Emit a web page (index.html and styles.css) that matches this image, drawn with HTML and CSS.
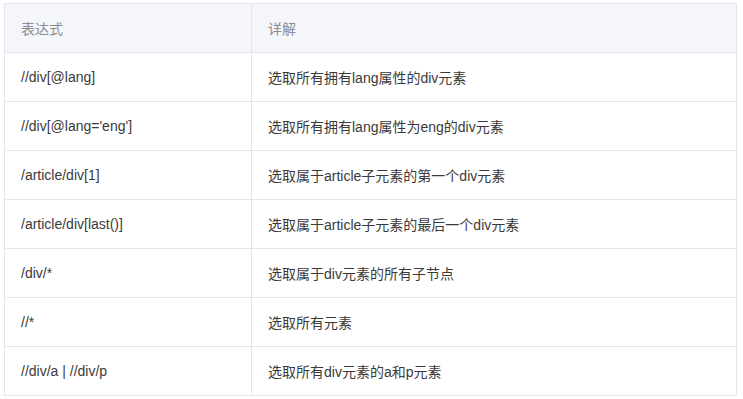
FILE: index.html
```html
<!DOCTYPE html>
<html lang="zh">
<head>
<meta charset="utf-8">
<link rel="stylesheet" href="styles.css">
</head>
<body>
<div class="wrap">
<table class="tbl">
  <thead>
    <tr><th class="c1">表达式</th><th>详解</th></tr>
  </thead>
  <tbody>
    <tr><td class="c1">//div[@lang]</td><td>选取所有拥有lang属性的div元素</td></tr>
    <tr><td class="c1">//div[@lang='eng']</td><td>选取所有拥有lang属性为eng的div元素</td></tr>
    <tr><td class="c1">/article/div[1]</td><td>选取属于article子元素的第一个div元素</td></tr>
    <tr><td class="c1">/article/div[last()]</td><td>选取属于article子元素的最后一个div元素</td></tr>
    <tr><td class="c1">/div/*</td><td>选取属于div元素的所有子节点</td></tr>
    <tr><td class="c1">//*</td><td>选取所有元素</td></tr>
    <tr><td class="c1">//div/a | //div/p</td><td>选取所有div元素的a和p元素</td></tr>
  </tbody>
</table>
</div>
</body>
</html>
```

FILE: styles.css
```css
html, body {
  margin: 0;
  padding: 0;
  background: #fff;
}
.wrap {
  padding: 3px 6px 0 4px;
}
.tbl {
  width: 733px;
  border-collapse: collapse;
  table-layout: fixed;
  font-family: "Liberation Sans", "Noto Sans CJK SC", sans-serif;
  font-size: 14px;
}
.tbl th, .tbl td {
  height: 49px;
  padding: 0 15px 0 16px;
  border: 1px solid #e3e6ee;
  text-align: left;
  vertical-align: middle;
  box-sizing: border-box;
}
.tbl th {
  background: #f5f6fa;
  color: #8a8d94;
  font-weight: normal;
}
.tbl td {
  color: #3a3a3a;
}
.tbl .c1 {
  width: 247px;
}
```
